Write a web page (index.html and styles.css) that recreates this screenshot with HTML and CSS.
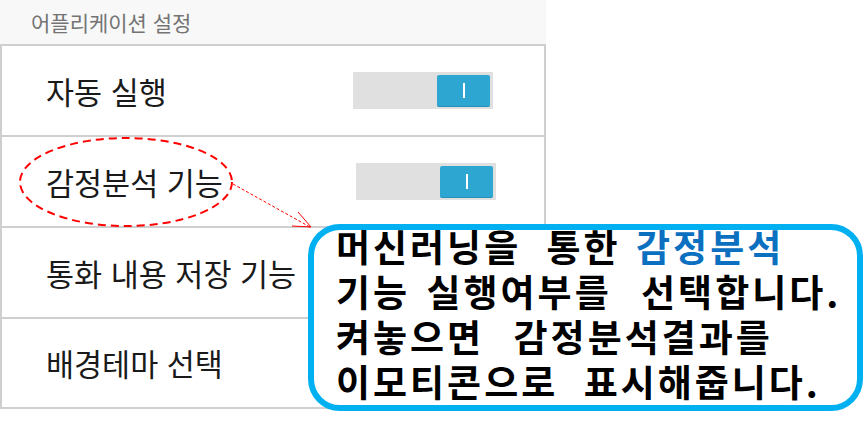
FILE: index.html
```html
<!DOCTYPE html>
<html lang="ko">
<head>
<meta charset="utf-8">
<link rel="stylesheet" href="styles.css">
</head>
<body>
<div class="page">
  <div class="panel">
    <div class="panel-header">어플리케이션 설정</div>
    <div class="row">
      <span class="row-label">자동 실행</span>
      <div class="toggle"><div class="knob"><span class="bar"></span></div></div>
    </div>
    <div class="row">
      <span class="row-label">감정분석 기능</span>
      <div class="toggle toggle-shift"><div class="knob"><span class="bar"></span></div></div>
    </div>
    <div class="row">
      <span class="row-label">통화 내용 저장 기능</span>
    </div>
    <div class="row">
      <span class="row-label">배경테마 선택</span>
    </div>
  </div>

  <svg class="annot" width="864" height="433" viewBox="0 0 864 433">
    <ellipse cx="126" cy="182" rx="106" ry="44" fill="none" stroke="#ff0000" stroke-width="2" stroke-dasharray="8 5"/>
    <line x1="233" y1="184" x2="310" y2="227" stroke="#ff0000" stroke-width="1" stroke-dasharray="3 2"/>
    <polyline points="298,212 311,227 292,226" fill="none" stroke="#ff0000" stroke-width="1"/>
  </svg>

  <div class="callout">
    <div class="callout-text">
      <p class="callout-line">머신러닝을<span class="sp-l2"> </span>통한<span class="sp-s"> </span><span class="hl">감정분석</span></p>
      <p class="callout-line">기능<span class="sp-m"> </span>실행여부를<span class="sp-l"> </span>선택합니다.</p>
      <p class="callout-line">켜놓으면<span class="sp-l"> </span>감정분석결과를</p>
      <p class="callout-line">이모티콘으로<span class="sp-l4"> </span>표시해줍니다.</p>
    </div>
  </div>
</div>
</body>
</html>
```

FILE: styles.css
```css
* { box-sizing: border-box; }
html, body {
  margin: 0;
  padding: 0;
  background: #ffffff;
}
.page {
  position: relative;
  width: 864px;
  height: 433px;
  overflow: hidden;
  font-family: "Noto Sans CJK KR", "Noto Sans", sans-serif;
}
.panel {
  width: 546px;
  display: flex;
  flex-direction: column;
}
.panel-header {
  height: 44px;
  background: #f8f8f8;
  color: #747474;
  font-size: 21px;
  padding-left: 31px;
  display: flex;
  align-items: center;
}
.row {
  height: 91px;
  border-top: 2px solid #cfcfcf;
  border-left: 2px solid #cfcfcf;
  border-right: 2px solid #cfcfcf;
  background: #ffffff;
  display: flex;
  align-items: center;
  justify-content: space-between;
  padding-left: 44px;
  padding-right: 51px;
}
.row:last-child {
  height: 92px;
  border-bottom: 2px solid #cfcfcf;
}
.row-label {
  font-size: 30.5px;
  color: #1a1a1a;
}
.toggle {
  width: 140px;
  height: 37px;
  background: #e0e0e0;
  display: flex;
  align-items: center;
  justify-content: flex-end;
  padding-right: 3px;
}
.toggle-shift {
  margin-right: -3px;
}
.knob {
  width: 53px;
  height: 32px;
  background: #2ea6d2;
  border-radius: 2px;
  border-bottom: 1px solid #2590b8;
  display: flex;
  align-items: center;
  justify-content: center;
}
.bar {
  width: 2px;
  height: 15px;
  background: #ffffff;
}
.annot {
  position: absolute;
  left: 0;
  top: 0;
  pointer-events: none;
}
.callout {
  position: absolute;
  left: 308px;
  top: 224px;
  width: 555px;
  height: 187px;
  border: 6px solid #00b0f0;
  border-radius: 32px;
  background: #ffffff;
  padding: 0 0 0 22px;
}
.callout-text {
  margin-top: -6px;
}
.callout-line {
  margin: 0;
  font-size: 37px;
  font-weight: 700;
  line-height: 45px;
  letter-spacing: 3px;
  color: #000000;
  white-space: nowrap;
}
.sp-s { word-spacing: 2px; }
.sp-m { word-spacing: 3px; }
.sp-l2 { word-spacing: 12px; }
.sp-l { word-spacing: 16px; }
.sp-l4 { word-spacing: 12px; }
.hl {
  color: #0b70c0;
}
```
